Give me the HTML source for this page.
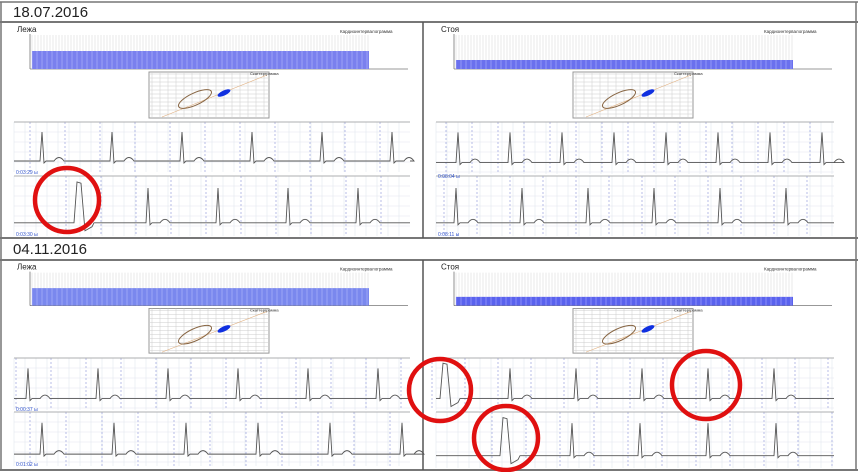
<!DOCTYPE html>
<html><head><meta charset="utf-8"><style>
html,body{margin:0;padding:0;background:#fff;width:858px;height:472px;overflow:hidden}
svg{display:block}
</style></head><body>
<svg id="s" width="858" height="472" xmlns="http://www.w3.org/2000/svg" font-family="Liberation Sans, sans-serif">
<rect width="858" height="472" fill="#fff"/>
<g id="g"></g>
<text x="13" y="17" font-size="15" fill="#222">18.07.2016</text>
<text x="13" y="254" font-size="15" fill="#222">04.11.2016</text>
</svg>
<script>
var g=document.getElementById('g'),o='';
function L(x1,y1,x2,y2,c,w){o+='<line x1="'+x1+'" y1="'+y1+'" x2="'+x2+'" y2="'+y2+'" stroke="'+c+'" stroke-width="'+(w||1)+'"/>';}
function R(x,y,w,h,f,s){o+='<rect x="'+x+'" y="'+y+'" width="'+w+'" height="'+h+'" fill="'+f+'"'+(s?' stroke="'+s+'"':'')+'/>';}
function T(x,y,t,sz,c){o+='<text x="'+x+'" y="'+y+'" font-size="'+sz+'" fill="'+c+'">'+t+'</text>';}
L(0,2,858,2,'#777',1.5);L(0,22,858,22,'#777',2);L(0,238,858,238,'#777',2);L(0,260,858,260,'#777',2);L(0,470,858,470,'#777',2);
L(1,2,1,470,'#777',1.5);L(856,2,856,470,'#777',1.5);L(423,22,423,238,'#555',1.5);L(423,260,423,470,'#555',1.5);
function ecg(x0,y0,w,h,per,ph,big){
  R(x0,y0,w,h,'#fff');
  for(var x=x0;x<x0+w;x+=11)L(x,y0,x,y0+h,'#e2e6ef',0.6);
  for(var y=y0;y<y0+h;y+=10)L(x0,y,x0+w,y,'#e2e6ef',0.6);
  for(var x=x0+ph-12;x<x0+w;x+=per/2)L(x,y0,x,y0+h,'#9aa3dd','0.7" stroke-dasharray="2,2');
  L(x0,y0,x0+w,y0,'#999',0.8);
  var b=y0+h*0.78,d='M'+x0+' '+b;
  for(var k=x0+ph;k<x0+w-6;k+=per){
    var isBig=big&&big.indexOf(Math.round((k-x0-ph)/per))>=0;
    if(isBig){d+=' L'+(k-4)+' '+b+' L'+(k-1)+' '+(y0+h*0.1)+' L'+(k+3)+' '+(y0+h*0.12)+' L'+(k+7)+' '+(b+8)+' L'+(k+14)+' '+(b+4)+' L'+(k+16)+' '+b;}
    else{d+=' L'+(k-2)+' '+b+' L'+k+' '+(y0+h*0.2)+' L'+(k+2)+' '+(b+2)+' L'+(k+4)+' '+b+' L'+(k+12)+' '+b+' Q'+(k+17)+' '+(b-7)+' '+(k+22)+' '+b;}
  }
  d+=' L'+(x0+w)+' '+b;
  o+='<path d="'+d+'" fill="none" stroke="#555" stroke-width="0.9"/>';
}
function panel(x0,y0,sy,title,bars,st){
  function Y(v){return y0+v*sy;}
  T(x0+15,Y(10),title,8,'#222');
  T(x0+338,Y(11),'Кардиоинтервалограмма',4.5,'#333');
  L(x0+28,Y(12),x0+28,Y(47),'#777',0.8);L(x0+28,Y(47),x0+406,Y(47),'#777',0.8);
  for(var x=x0+30;x<x0+367;x+=3)L(x,Y(13),x,Y(47),'#d4d4d4',0.5);
  R(x0+30,Y(st?38:29),337,Y(47)-Y(st?38:29),bars);
  for(var x=x0+30;x<x0+367;x+=5)L(x,Y(st?38:29),x,Y(47),'#d0d4ff',0.4);
  R(x0+147,Y(50),120,Y(96)-Y(50),'#fff','#999');
  for(var x=x0+150;x<x0+267;x+=8)L(x,Y(50),x,Y(96),'#ccc',0.5);
  for(var y=Y(52);y<Y(96);y+=4)L(x0+147,y,x0+267,y,'#ccc',0.5);
  L(x0+160,Y(95),x0+265,Y(53),'#e0b080',0.6);
  o+='<ellipse cx="'+(x0+193)+'" cy="'+Y(77)+'" rx="18" ry="6" transform="rotate(-25 '+(x0+193)+' '+Y(77)+')" fill="none" stroke="#864"/>';
  o+='<ellipse cx="'+(x0+222)+'" cy="'+Y(71)+'" rx="7" ry="2.5" transform="rotate(-25 '+(x0+222)+' '+Y(71)+')" fill="#1030e0"/>';
  T(x0+248,Y(53),'Скаттерграмма',4,'#333');
}
panel(2,22,1,'Лежа','#7a80ee');
panel(426,22,1,'Стоя','#6a70ee',1);
panel(2,260,0.97,'Лежа','#7a88ee');
panel(426,260,0.97,'Стоя','#5a62ee',1);
ecg(14,122,396,50,70,28);
ecg(14,176,396,60,70,64,[0]);
ecg(436,122,398,52,52,22);
ecg(436,176,398,60,66,20);
ecg(14,358,396,52,70,14);
ecg(14,412,396,54,72,28);
ecg(436,358,398,52,66,8,[0,8]);
ecg(436,412,398,56,68,68,[0]);
T(16,174,'0:03:29 ы',5,'#35c');T(16,236,'0:03:30 ы',5,'#35c');
T(438,178,'0:08:04 ы',5,'#35c');T(438,236,'0:08:11 ы',5,'#35c');
T(16,411,'0:00:37 ы',5,'#35c');T(16,466,'0:01:02 ы',5,'#35c');
function C(x,y,r){o+='<circle cx="'+x+'" cy="'+y+'" r="'+r+'" fill="none" stroke="#e01010" stroke-width="4.5"/>';}
C(67,200,32);C(440,390,31);C(506,438,32);C(706,385,34);
g.innerHTML=o;
</script>
</body></html>
